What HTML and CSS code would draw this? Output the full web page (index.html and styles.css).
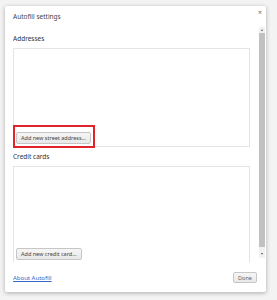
FILE: index.html
```html
<!DOCTYPE html>
<html lang="en">
<head>
	<meta charset="UTF-8">
	<title>Autofill settings</title>
	<link rel="stylesheet" href="styles.css">
</head>
<body>
	<div class="dialog">
		<div class="head">
			<span class="title">Autofill settings</span>
			<span class="close">&#215;</span>
		</div>
		<div class="main">
			<div class="scroll">
				<div class="label first">Addresses</div>
				<div class="list">
					<button class="btn">Add new street address...</button>
					<div class="mark"></div>
				</div>
				<div class="label">Credit cards</div>
				<div class="list cards">
					<button class="btn">Add new credit card...</button>
				</div>
			</div>
			<div class="bar">
				<span class="arrow up"></span>
				<span class="thumb"></span>
				<span class="arrow down"></span>
			</div>
		</div>
		<div class="foot">
			<a class="link" href="javascript:void(0)">About Autofill</a>
			<button class="btn done">Done</button>
		</div>
	</div>
</body>
</html>
```

FILE: styles.css
```css
*{padding:0;margin:0;box-sizing:border-box;}
body{width:277px;height:300px;overflow:hidden;background:#f3f3f3;padding:6px 0 0 5px;font-family:"Noto Sans",sans-serif;color:#333;}
.dialog{width:261px;height:286px;background:#fff;border-radius:2px;box-shadow:0 1px 4px rgba(0,0,0,0.3);display:flex;flex-direction:column;}

.head{height:21px;display:flex;align-items:center;justify-content:space-between;padding:0 4px 0 8px;}
.title{font-size:6.5px;color:#444;}
.close{font-size:7px;color:#666;line-height:7px;margin-top:-8px;}

.main{height:235px;display:flex;align-items:flex-start;padding-left:8px;overflow:hidden;}
.scroll{width:237px;height:235px;overflow:hidden;}
.label{font-size:6.5px;line-height:14px;padding:3px 0 2px;color:#333;}
.label.first{margin-top:2px;}
.list{height:99px;border:1px solid #e4e4e4;position:relative;display:flex;align-items:flex-end;padding:0 0 2px 2px;}
.list.cards{height:97px;}
.mark{position:absolute;left:-1px;top:76px;width:82px;height:23px;border:2px solid #e3232b;}

.btn{height:12px;padding:0 4px;font-family:"Noto Sans",sans-serif;font-size:5.5px;color:#444;background:linear-gradient(#f6f6f6,#e8e8e8);border:1px solid #c6c6c6;border-radius:2px;}

.bar{width:6px;height:231px;margin-left:auto;margin-right:1px;background:#f1f1f1;display:flex;flex-direction:column;align-items:center;}
.arrow{width:0;height:0;border-left:1.5px solid transparent;border-right:1.5px solid transparent;}
.arrow.up{border-bottom:2px solid #606060;margin-top:2px;}
.arrow.down{border-top:2px solid #606060;margin-top:6px;}
.thumb{width:6px;height:214px;margin-top:2px;background:#c1c1c1;}

.foot{flex:1;display:flex;align-items:center;justify-content:space-between;padding:9px 9px 8px 8px;}
.link{font-size:6px;color:#3a66c8;text-decoration:underline;}
.done{width:24px;height:11px;padding:0;color:#666;}
```
